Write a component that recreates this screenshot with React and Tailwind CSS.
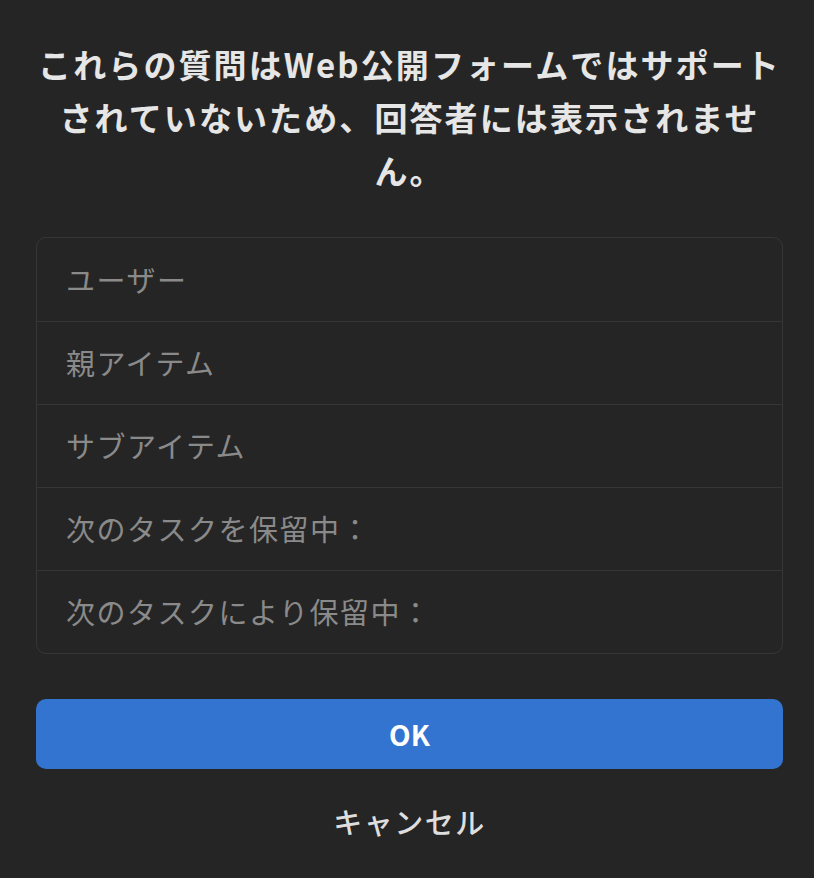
import React from "react";

const fields = [
  "ユーザー",
  "親アイテム",
  "サブアイテム",
  "次のタスクを保留中：",
  "次のタスクにより保留中：",
];

const UnsupportedFieldsDialog = () => {
  return (
    <div
      className="min-h-[878px] w-full bg-[#252525] flex flex-col items-stretch pl-[36px] pr-[31px] pt-[38px]"
      style={{ fontFamily: '"Noto Sans CJK JP", "Noto Sans", sans-serif' }}
    >
      <h1 className="text-center text-[33px] leading-[53px] font-bold text-[#e6e6e6] tracking-[2.1px] whitespace-nowrap">
        これらの質問はWeb公開フォームではサポート
        <br />
        されていないため、回答者には表示されませ
        <br />
        ん。
      </h1>

      <div className="mt-[40px] rounded-[10px] border border-[#363636] flex flex-col">
        {fields.map((label, i) => (
          <div
            key={label}
            className={
              "h-[83px] flex items-center px-[29px] text-[29px] text-[#8a8a8a] tracking-[1.5px] " +
              (i > 0 ? "border-t border-[#363636]" : "")
            }
          >
            {label}
          </div>
        ))}
      </div>

      <button className="mt-[45px] h-[70px] w-full rounded-[10px] bg-[#3374d1] text-white text-[28px] font-bold">
        OK
      </button>

      <button className="mt-[28px] h-[50px] w-full text-[29px] font-medium text-[#dedede] tracking-[1.5px]">
        キャンセル
      </button>
    </div>
  );
};

export default function App() {
  return <UnsupportedFieldsDialog />;
}
